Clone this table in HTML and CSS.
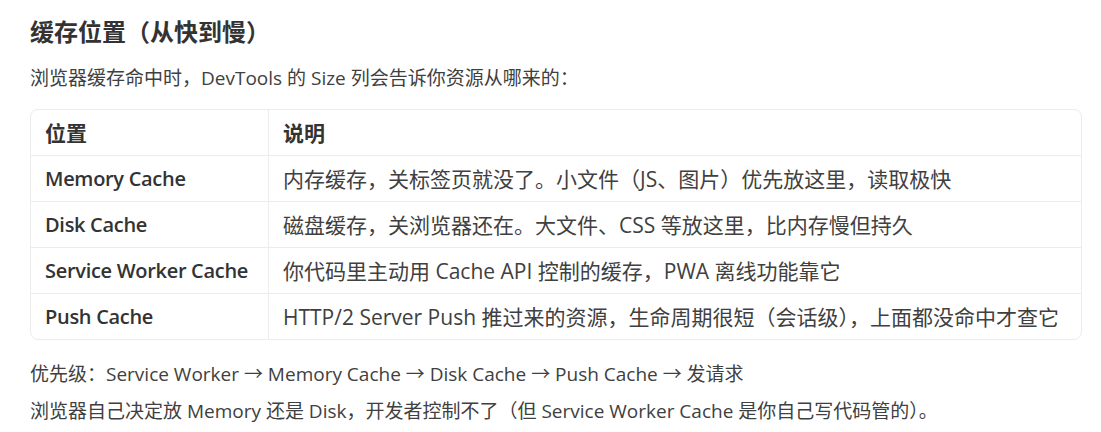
FILE: index.html
```html
<!doctype html>
<html lang="zh-CN">
    <head>
        <meta charset="utf-8">
        <title>缓存位置</title>
        <link rel="stylesheet" href="styles.css">
    </head>
    <body>
        <div class="content">

            <h3 class="section-title">缓存位置（从快到慢）</h3>

            <p class="text">浏览器缓存命中时，DevTools 的 Size 列会告诉你资源从哪来的：</p>

            <div class="table-wrap">
                <table class="cache-table">
                    <thead>
                        <tr>
                            <th class="col-name">位置</th>
                            <th>说明</th>
                        </tr>
                    </thead>
                    <tbody>
                        <tr>
                            <td class="col-name">Memory Cache</td>
                            <td>内存缓存，关标签页就没了。小文件（JS、图片）优先放这里，读取极快</td>
                        </tr>
                        <tr>
                            <td class="col-name">Disk Cache</td>
                            <td>磁盘缓存，关浏览器还在。大文件、CSS 等放这里，比内存慢但持久</td>
                        </tr>
                        <tr>
                            <td class="col-name">Service Worker Cache</td>
                            <td>你代码里主动用 Cache API 控制的缓存，PWA 离线功能靠它</td>
                        </tr>
                        <tr>
                            <td class="col-name">Push Cache</td>
                            <td>HTTP/2 Server Push 推过来的资源，生命周期很短（会话级），上面都没命中才查它</td>
                        </tr>
                    </tbody>
                </table>
            </div>

            <p class="text text-after">优先级：Service Worker → Memory Cache → Disk Cache → Push Cache → 发请求</p>
            <p class="text">浏览器自己决定放 Memory 还是 Disk，开发者控制不了（但 Service Worker Cache 是你自己写代码管的）。</p>

        </div>
    </body>
</html>
```

FILE: styles.css
```css
html,
body {
    margin: 0;
    padding: 0;
    background: #fff;
}

body {
    font-family: "Open Sans", "Noto Sans CJK SC", sans-serif;
    color: #404040;
    font-size: 19px;
}

.content {
    padding: 14px 19px 0 30px;
}

.section-title {
    margin: 0 0 10px;
    font-size: 24px;
    line-height: 36px;
    font-weight: 700;
    color: #333;
}

.text {
    margin: 0;
    font-size: 19px;
    line-height: 37px;
}

.text-after {
    margin-top: 16px;
}

.table-wrap {
    margin-top: 12px;
    border: 1px solid #ececec;
    border-radius: 8px;
    overflow: hidden;
}

.cache-table {
    width: 100%;
    border-collapse: collapse;
    table-layout: fixed;
}

.cache-table th,
.cache-table td {
    height: 45px;
    padding: 0 14px;
    text-align: left;
    font-size: 21px;
    line-height: 24px;
    white-space: nowrap;
    border-bottom: 1px solid #ececec;
    border-right: 1px solid #ececec;
}

.cache-table th {
    font-weight: 700;
    color: #333;
}

.cache-table td.col-name {
    font-size: 20px;
    font-weight: 600;
    letter-spacing: -0.3px;
    color: #333;
}

.cache-table tr > :last-child {
    border-right: none;
}

.cache-table tbody tr:last-child td {
    border-bottom: none;
}

.col-name {
    width: 209px;
}
```
